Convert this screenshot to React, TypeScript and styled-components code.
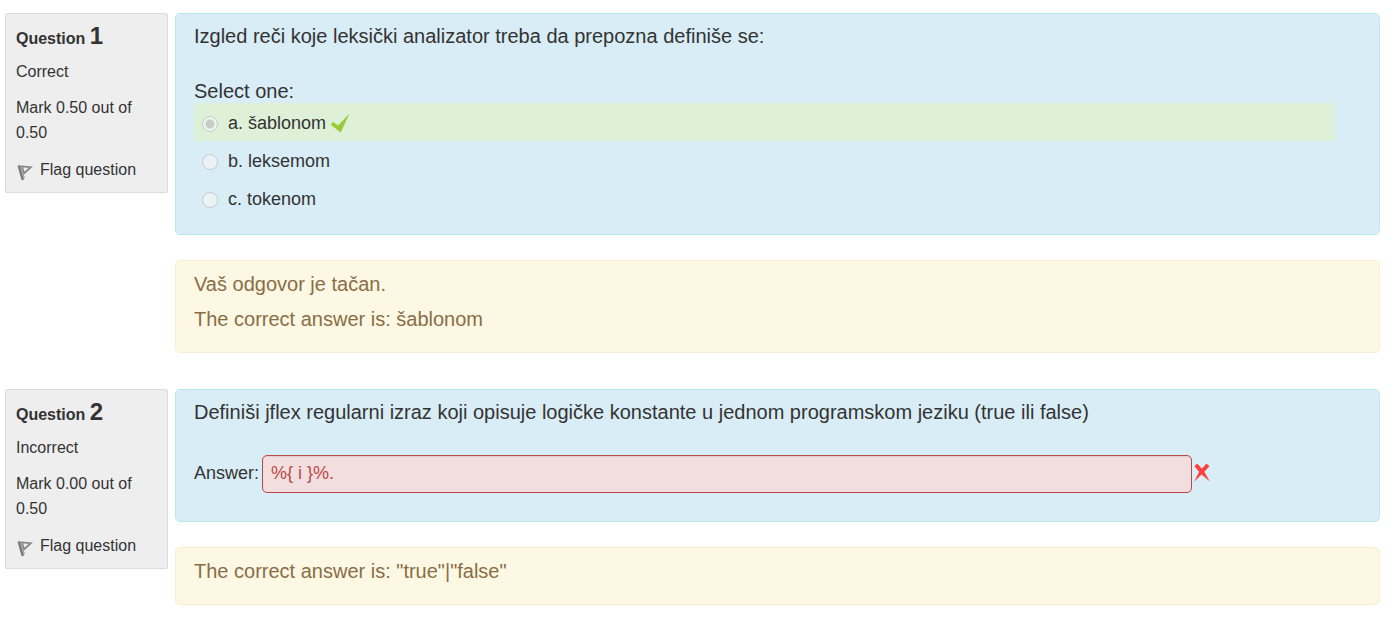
import React from "react";
import styled, { createGlobalStyle } from "styled-components";

const GlobalStyle = createGlobalStyle`
  *, *::before, *::after { box-sizing: border-box; }
  body {
    margin: 0;
    background: #fff;
    color: #333;
    font-family: "Liberation Sans", Arial, Helvetica, sans-serif;
    font-size: 18px;
    line-height: 25px;
  }
`;

const Page = styled.main`
  display: flex;
  flex-direction: column;
  gap: 36px;
  padding: 13px 17px 23px 5px;
`;

const Question = styled.section`
  display: grid;
  grid-template-columns: 163px minmax(0, 1fr);
  gap: 7px;
  align-items: start;
`;

const Info = styled.aside`
  display: flex;
  flex-direction: column;
  gap: 11px;
  padding: 12px 10px 10px;
  border: 1px solid #dcdcdc;
  border-radius: 2px;
  background: #eee;
  font-size: 16px;
`;

const Title = styled.h3`
  margin: 0 0 -3px;
  font-size: 16px;
  line-height: 24px;
`;

const Number = styled.span`
  font-size: 24px;
  line-height: 20px;
`;

const Line = styled.p`
  margin: 0;
`;

const FlagLink = styled.a`
  display: flex;
  align-items: center;
  gap: 7px;
  padding-top: 1px;
  color: #333;
  text-decoration: none;

  svg {
    margin-top: 4px;
  }
`;

const Content = styled.div`
  display: flex;
  flex-direction: column;
  gap: 25px;
`;

const Box = styled.div`
  padding: 8px 18px 17px;
  border: 1px solid #bce8f1;
  border-radius: 5px;
  background: #d9edf7;
`;

const Feedback = styled.div`
  display: flex;
  flex-direction: column;
  gap: 7px;
  padding: 9px 18px 19px;
  border: 1px solid #fbeed5;
  border-radius: 5px;
  background: #fcf8e3;
  color: #8a6d47;
  font-size: 20px;
  line-height: 28px;
`;

const Prompt = styled.p`
  margin: 0 0 26px;
  font-size: 20px;
  line-height: 28px;
`;

const Options = styled.fieldset`
  margin: 0;
  padding: 0 26px 0 0;
  border: 0;
  min-width: 0;
`;

const Legend = styled.legend`
  padding: 4px 0 0;
  font-size: 20px;
  line-height: 23px;
`;

const Option = styled.label<{ $correct?: boolean }>`
  display: flex;
  align-items: center;
  height: 38px;
  padding: 2px 0 0 8px;
  background: ${(p) => (p.$correct ? "#dff0d8" : "transparent")};

  svg {
    margin-left: 4px;
  }
`;

const Radio = styled.input`
  appearance: none;
  width: 16px;
  height: 16px;
  margin: 2px 10px 0 0;
  border: 1px solid #c5cbce;
  border-radius: 50%;
  background: #ebf2f6;

  &:checked {
    background: radial-gradient(circle, #c6cdc4 0 4px, #eef4eb 5px);
  }
`;

const AnswerRow = styled.div`
  display: flex;
  align-items: center;
  padding: 3px 151px 11px 0;
`;

const AnswerInput = styled.input`
  flex: 1;
  min-width: 0;
  height: 38px;
  margin: 0 2px 0 3px;
  padding: 0 8px 2px;
  border: 1px solid #b94a48;
  border-radius: 5px;
  background: #f2dede;
  box-shadow: inset 0 1px 1px rgba(0, 0, 0, 0.075);
  color: #b94a48;
  font: inherit;
`;

const AnswerLabel = styled.label`
  padding-bottom: 2px;
`;

const FlagIcon = () => (
  <svg width="17" height="18" viewBox="0 0 17 18" fill="none" aria-hidden="true">
    <path d="M2.8 3 6.8 17" stroke="#777" strokeWidth="2.4" />
    <path d="M1.8 3.2 14.8 4.2 8 10.4 6.3 4.4" stroke="#858585" strokeWidth="1.8" />
    <path d="M5.4 4.4 8.2 15.6" stroke="#a0a0a0" strokeWidth="1.4" />
  </svg>
);

const TickIcon = () => (
  <svg width="20" height="20" viewBox="0 0 20 20" role="img" aria-label="Correct">
    <path d="M0.5 11.5 3.4 9 8 12.4 19.5 0.5 10.7 19.5Z" fill="#9c3" />
  </svg>
);

const CrossIcon = () => (
  <svg width="16" height="22" viewBox="0 0 17 22" preserveAspectRatio="none" role="img" aria-label="Incorrect">
    <path
      d="M0.4 3.3 3.4 0.6 8.4 5.8 13.2 0.6 16.4 3.3 11 8.8 16.8 18.4 8 11.4 0.2 18.8 5.4 8.8Z"
      fill="#ff403c"
    />
  </svg>
);

type InfoProps = { number: number; state: string; mark: string };

const QuestionInfo = ({ number, state, mark }: InfoProps) => (
  <Info>
    <Title>
      Question <Number>{number}</Number>
    </Title>
    <Line>{state}</Line>
    <Line>{`Mark ${mark} out of 0.50`}</Line>
    <FlagLink href="#flag">
      <FlagIcon />
      Flag question
    </FlagLink>
  </Info>
);

const choices = [
  { text: "a. šablonom", correct: true },
  { text: "b. leksemom", correct: false },
  { text: "c. tokenom", correct: false },
];

export default function App() {
  return (
    <>
      <GlobalStyle />
      <Page>
        <Question>
          <QuestionInfo number={1} state="Correct" mark="0.50" />
          <Content>
            <Box>
              <Prompt>Izgled reči koje leksički analizator treba da prepozna definiše se:</Prompt>
              <Options>
                <Legend>Select one:</Legend>
                {choices.map((c) => (
                  <Option key={c.text} $correct={c.correct}>
                    <Radio type="radio" name="q1" defaultChecked={c.correct} disabled />
                    {c.text}
                    {c.correct && <TickIcon />}
                  </Option>
                ))}
              </Options>
            </Box>
            <Feedback>
              <Line>Vaš odgovor je tačan.</Line>
              <Line>The correct answer is: šablonom</Line>
            </Feedback>
          </Content>
        </Question>
        <Question>
          <QuestionInfo number={2} state="Incorrect" mark="0.00" />
          <Content>
            <Box>
              <Prompt>
                Definiši jflex regularni izraz koji opisuje logičke konstante u jednom programskom
                jeziku (true ili false)
              </Prompt>
              <AnswerRow>
                <AnswerLabel htmlFor="q2-answer">Answer:</AnswerLabel>
                <AnswerInput id="q2-answer" type="text" defaultValue="%{ i }%." readOnly />
                <CrossIcon />
              </AnswerRow>
            </Box>
            <Feedback>
              <Line>The correct answer is: "true"|"false"</Line>
            </Feedback>
          </Content>
        </Question>
      </Page>
    </>
  );
}
